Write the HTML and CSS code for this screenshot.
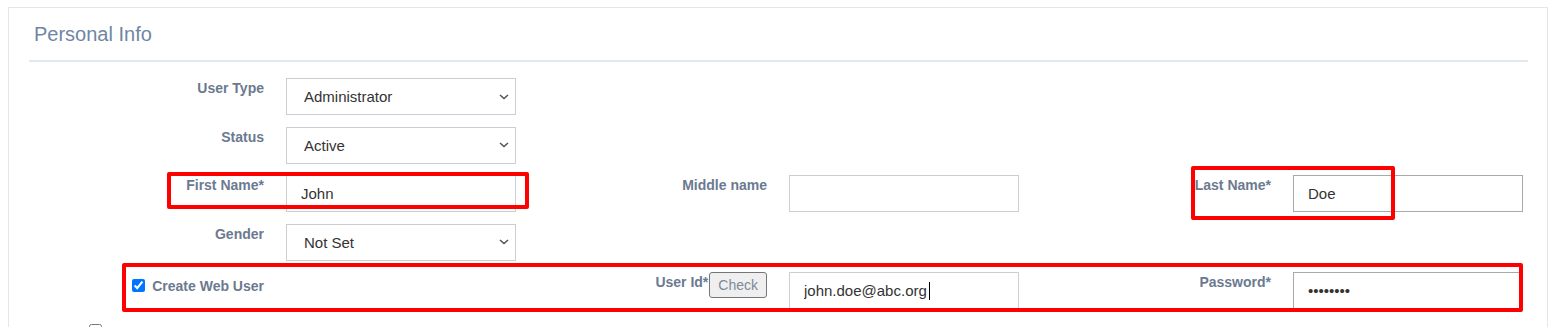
FILE: index.html
```html
<!DOCTYPE html>
<html lang="en">

<head>
    <meta charset="UTF-8">
    <meta name="viewport" content="width=device-width, initial-scale=1.0">
    <title>Personal Info</title>
    <link rel="stylesheet" href="styles.css">
</head>

<body>
    <div class="panel">
        <h3 class="panel-title">Personal Info</h3>
        <form class="form" action="">
            <div class="row">
                <label class="label" for="userType">User Type</label>
                <select id="userType" class="input">
                    <option selected>Administrator</option>
                    <option>User</option>
                </select>
            </div>
            <div class="row">
                <label class="label" for="status">Status</label>
                <select id="status" class="input">
                    <option selected>Active</option>
                    <option>Inactive</option>
                </select>
            </div>
            <div class="row">
                <label class="label" for="firstName">First Name*</label>
                <input type="text" id="firstName" class="input" value="John" />
                <label class="label" for="middleName">Middle name</label>
                <input type="text" id="middleName" class="input" value="" />
                <label class="label" for="lastName">Last Name*</label>
                <input type="text" id="lastName" class="input dark" value="Doe" />
            </div>
            <div class="row">
                <label class="label" for="gender">Gender</label>
                <select id="gender" class="input">
                    <option selected>Not Set</option>
                    <option>Male</option>
                    <option>Female</option>
                </select>
            </div>
            <div class="row">
                <label class="label label-check" for="webUser"><input type="checkbox" id="webUser" checked /> Create Web User</label>
                <div></div>
                <div class="label label-btn">
                    <label for="userId">User Id*</label>
                    <button type="button" class="check-btn">Check</button>
                </div>
                <div class="caret-wrap">
                    <input type="text" id="userId" class="input" value="john.doe@abc.org" />
                    <span class="caret"></span>
                </div>
                <label class="label" for="password">Password*</label>
                <input type="password" id="password" class="input dark" value="password" />
            </div>
            <div class="extra">
                <input type="checkbox" id="more" />
            </div>
        </form>
    </div>

    <!-- red highlight boxes drawn over the form -->
    <div class="mark mark-first"></div>
    <div class="mark mark-last"></div>
    <div class="mark mark-web"></div>
</body>

</html>
```

FILE: styles.css
```css
* {
    box-sizing: border-box;
}

body {
    margin: 7px 5px 0 8px;
    background: #fff;
    font-family: "Liberation Sans", Arial, sans-serif;
    height: 320px;
    overflow: hidden;
}

.panel {
    border: 1px solid #e6e6e6;
    border-bottom: none;
    padding: 0 19px 0 20px;
    background: #fff;
    height: 320px;
    overflow: hidden;
}

.panel-title {
    margin: 0;
    padding: 15px 5px 15px;
    font-size: 20px;
    line-height: 22px;
    font-weight: normal;
    color: #6f86a3;
    border-bottom: 2px solid #e3e8ee;
}

.form {
    margin-top: 16px;
}

.row {
    display: grid;
    grid-template-columns: 236px 230px 231px 230px 232px 230px;
    column-gap: 21px;
    margin-bottom: 11.5px;
}

.label {
    text-align: right;
    padding-right: 1px;
    font-size: 14px;
    line-height: 20px;
    font-weight: bold;
    color: #6b7a90;
}

.label-check {
    padding-top: 4px;
}

.label input[type="checkbox"] {
    margin: 0 3px 0 0;
    width: 13px;
    height: 13px;
    vertical-align: -1px;
}

.label-btn {
    display: flex;
    justify-content: flex-end;
    align-items: flex-start;
    padding-right: 0;
}

.check-btn {
    height: 26px;
    margin: 0 1px 0 1px;
    padding: 0 8px;
    font-family: "Liberation Sans", Arial, sans-serif;
    font-size: 14px;
    font-weight: normal;
    color: #7d8a99;
    background: #efefef;
    border: 1px solid #767676;
    border-radius: 3px;
}

.input {
    height: 37px;
    width: 230px;
    padding: 0 14px;
    font-family: "Liberation Sans", Arial, sans-serif;
    font-size: 15px;
    color: #333;
    background: #fff;
    border: 1px solid #cbcfd4;
    border-radius: 0;
    outline: none;
}

select.input {
    appearance: none;
    -webkit-appearance: none;
    padding-left: 17px;
    padding-right: 24px;
    background: #fff url("data:image/svg+xml;utf8,<svg xmlns='http://www.w3.org/2000/svg' width='10' height='6' viewBox='0 0 10 6'><path d='M1 1l4 3.5L9 1' fill='none' stroke='%23555' stroke-width='1.6'/></svg>") no-repeat right 6px center;
}

.input.dark {
    border-color: #a9a9a9;
}

.caret-wrap {
    position: relative;
}

/* text cursor after the typed value */
.caret {
    position: absolute;
    left: 140px;
    top: 10px;
    width: 1px;
    height: 18px;
    background: #000;
}

.extra {
    padding-left: 56px;
}

.extra input {
    margin: 3px 3px 3px 4px;
}

.mark {
    position: absolute;
    border: 4px solid #ff0000;
    border-radius: 2px;
}

.mark-first {
    left: 167px;
    top: 172px;
    width: 362px;
    height: 37px;
}

.mark-last {
    left: 1191px;
    top: 166px;
    width: 204px;
    height: 54px;
}

.mark-web {
    left: 122px;
    top: 263px;
    width: 1401px;
    height: 49px;
}
```
